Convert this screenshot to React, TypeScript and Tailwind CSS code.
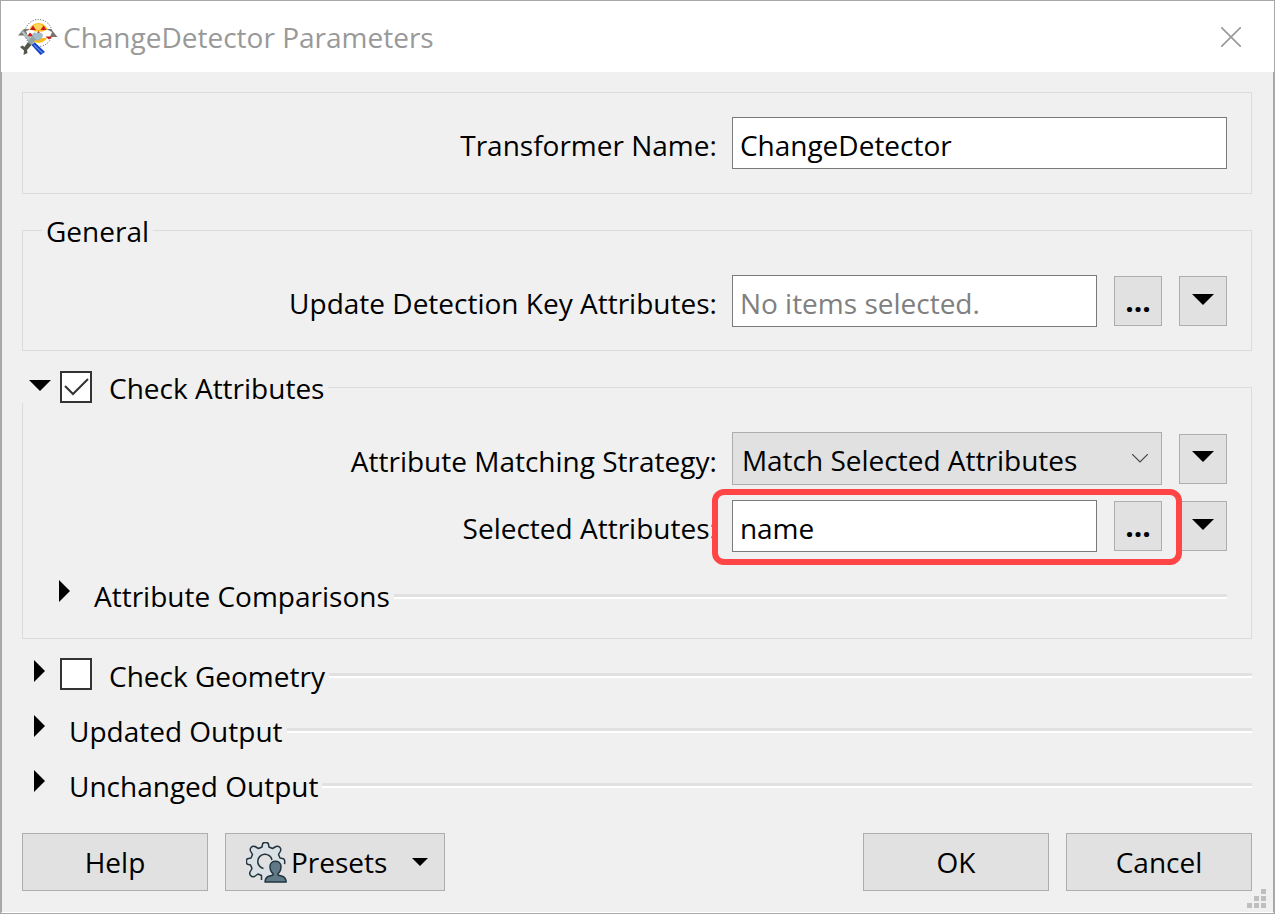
import { useState } from "react";
import type { ReactNode } from "react";
import clsx from "clsx";

const controlBorder = "border border-[#adadad] bg-[#e1e1e1]";

function TriangleDown({ className }: { className: string }) {
  return (
    <svg viewBox="0 0 22 11" className={className} aria-hidden="true">
      <path d="M0 0h22L11 11z" fill="currentColor" />
    </svg>
  );
}

function TriangleRight() {
  return (
    <svg viewBox="0 0 11 22" className="h-[22px] w-[11px]" aria-hidden="true">
      <path d="M0 0v22l11-11z" fill="currentColor" />
    </svg>
  );
}

function TransformerLogo() {
  return (
    <svg viewBox="0 0 40 36" className="h-9 w-10 shrink-0" aria-hidden="true">
      <circle cx="20.5" cy="14" r="13.5" fill="#fff" stroke="#444" strokeWidth="1" strokeDasharray="1 1.6" />
      <circle cx="20.5" cy="14" r="10" fill="#fdb91c" />
      <ellipse cx="20" cy="8" rx="5" ry="3" fill="#ffd65a" />
      <path d="M0 16.5l6-6.500h5l-2 6.500zM29 10h4l6.500 8H31z" fill="#77756c" />
      <path d="M8 12l5-1.500 4 2h8l4-2 5 2.500-2 5-5 1H11z" fill="#fff" />
      <path d="M12 11l3-4.500 3 4.500zM22.500 11l3-4.500 3 4.500zM17.500 16l3-4 3 4zM27.500 17.500h7l-3.500 3zM9 17.500l3-4 4 4z" fill="#c9181e" />
      <path d="M3 13l2-1.500L18 25l-3 2z" fill="#b5c6cb" stroke="#7c898b" strokeWidth=".6" />
      <path d="M15 15l2-2 1 4 3 1 2-4 1.500 1v3l-4 3.500-3-.5-8 9-3-2z" fill="#93a3a3" />
      <path d="M14.500 14.500l7-1 3 2-1 4-4 2-4-3z" fill="#a3bec9" />
      <path d="M2 28l2.500-1.500 2 1.500 3.500-4.500 3.500 2.500-4.500 5 .5 3-4 2 .5-4.500z" fill="#56564b" />
      <path d="M13.500 26l3.500-2.500L27 33l-4.500 3z" fill="#1743c4" />
      <path d="M16 26l8.500 8" stroke="#5f8cf0" strokeWidth="1.200" />
    </svg>
  );
}

function PresetsIcon() {
  return (
    <svg
      viewBox="0 0 41 41"
      className="size-[41px] shrink-0"
      fill="none"
      stroke="#22343e"
      strokeWidth="1.5"
      strokeLinejoin="round"
      aria-hidden="true"
    >
      <path
        d="M15.500 38v-4.500l-3.500-1.500-3.500 2.500c-3 1-5.500-1.500-4.500-4.500l2-3.500-1.500-3.500-3-.7c-1.500-1-1.500-4.600 0-5.600l3.500-.7 1.500-3.500-2-3.500c-1-3 1.500-5.500 4.500-4.500l3.500 2 3.500-1.500.7-3.500c1-1.500 4.600-1.500 5.600 0l.7 3.500 3.500 1.500 3.500-2c3-1 5.500 1.500 4.500 4.500l-2 3.500 1.500 3.500 3.500.7c1.500 1 1.500 3 1 5.500"
        fill="#dae1e4"
      />
      <path d="M17.500 26.500a7.200 7.200 0 1 1 8.500-8.500" fill="#e1e1e1" />
      <path
        d="M24 24.500c0-7 11-7 11 0 0 3.500-1 5.500-3 7v1.500l5 1.500c2.500 1 3 3 3.200 5.500H19c.2-2.500.7-4.500 3-5.500l5-1.500v-1.500c-2-1.500-3-3.500-3-7z"
        fill="#5f7986"
      />
    </svg>
  );
}

function Row({ label, htmlFor, children }: { label: string; htmlFor: string; children: ReactNode }) {
  return (
    <div className="grid grid-cols-[minmax(0,23fr)_minmax(0,17fr)] items-center gap-[15px]">
      <label htmlFor={htmlFor} className="pt-1 text-right whitespace-nowrap">
        {label}
      </label>
      <div className="relative flex min-w-0 items-center gap-[17px]">{children}</div>
    </div>
  );
}

function TextField({
  id,
  initial = "",
  placeholder,
}: {
  id: string;
  initial?: string;
  placeholder?: string;
}) {
  const [value, setValue] = useState(initial);

  return (
    <input
      id={id}
      type="text"
      value={value}
      placeholder={placeholder}
      onChange={(e) => setValue(e.target.value)}
      className="h-[52px] min-w-0 flex-1 border border-[#7a7a7a] bg-white px-[7px] pt-1 outline-none placeholder:text-[#808080]"
    />
  );
}

function BrowseButton({ label }: { label: string }) {
  return (
    <button
      type="button"
      aria-label={label}
      className={clsx(controlBorder, "h-[50px] w-12 shrink-0 text-[30px] font-bold")}
    >
      ...
    </button>
  );
}

function MenuButton({ label }: { label: string }) {
  return (
    <button
      type="button"
      aria-label={label}
      className={clsx(controlBorder, "grid h-[50px] w-12 shrink-0 place-items-center pb-1")}
    >
      <TriangleDown className="h-[11px] w-[22px]" />
    </button>
  );
}

function CheckBox({ id, initial }: { id: string; initial: boolean }) {
  const [checked, setChecked] = useState(initial);

  return (
    <span className="relative size-8 shrink-0">
      <input
        id={id}
        type="checkbox"
        checked={checked}
        onChange={(e) => setChecked(e.target.checked)}
        className="block size-8 appearance-none border-2 border-[#333] bg-white"
      />
      {checked && (
        <svg viewBox="0 0 32 32" className="pointer-events-none absolute inset-0" aria-hidden="true">
          <path d="M5 15l8 8L28 8" fill="none" stroke="#333" strokeWidth="2" />
        </svg>
      )}
    </span>
  );
}

function Section({
  title,
  checkboxId,
  className = "h-[55px]",
}: {
  title: string;
  checkboxId?: string;
  className?: string;
}) {
  return (
    <div className={clsx("flex items-center", className)}>
      <button type="button" aria-label={`Expand ${title}`} className="w-[38px] shrink-0 pb-1.5 pl-3">
        <TriangleRight />
      </button>
      {checkboxId ? (
        <>
          <CheckBox id={checkboxId} initial={false} />
          <label htmlFor={checkboxId} className="pt-1 pr-1 pl-[17px]">
            {title}
          </label>
        </>
      ) : (
        <span className="pt-1 pr-1 pl-[9px]">{title}</span>
      )}
      <span className="mt-1 h-[5px] flex-1 border-t-3 border-b-2 border-t-[#e1e1e1] border-b-white" />
    </div>
  );
}

export default function App() {
  return (
    <main className="relative flex min-h-screen flex-col border border-[#a8a8a8] bg-[#f0f0f0] font-['Open_Sans',sans-serif] text-[28px] leading-10 text-black">
      <header className="flex h-[71px] items-center bg-white pl-[17px] text-[#999]">
        <TransformerLogo />
        <h1 className="flex-1 pl-[5px]">ChangeDetector Parameters</h1>
        <button type="button" aria-label="Close" className="mr-8 p-[1px]">
          <svg viewBox="0 0 20 20" className="size-5" aria-hidden="true">
            <path d="M0 0l20 20M20 0L0 20" stroke="#999" strokeWidth="1.6" />
          </svg>
        </button>
      </header>

      <form
        className="flex flex-1 flex-col border-x border-b border-x-[#a8a8a8] border-b-white py-5 pr-[21px] pl-5"
        onSubmit={(e) => e.preventDefault()}
      >
        <div className="border border-[#dcdcdc] px-6 py-6">
          <Row label="Transformer Name:" htmlFor="transformer-name">
            <TextField id="transformer-name" initial="ChangeDetector" />
          </Row>
        </div>

        <fieldset className="mt-5 min-w-0 border border-[#dcdcdc]">
          <legend className="ml-[19px] flex h-8 items-center px-1 pt-0.5">General</legend>
          <div className="px-6 pt-[29px] pb-[23px]">
            <Row label="Update Detection Key Attributes:" htmlFor="key-attributes">
              <TextField id="key-attributes" placeholder="No items selected." />
              <BrowseButton label="Browse key attributes" />
              <MenuButton label="Key attributes menu" />
            </Row>
          </div>
        </fieldset>

        <fieldset className="mt-5 min-w-0 border border-[#dcdcdc]">
          <legend className="-ml-px flex h-8 items-center bg-[#f0f0f0]">
            <button type="button" aria-label="Collapse Check Attributes" className="w-[38px] shrink-0 pb-1 pl-[7px]">
              <TriangleDown className="h-[11px] w-[22px]" />
            </button>
            <CheckBox id="check-attributes" initial={true} />
            <label htmlFor="check-attributes" className="pt-0.5 pr-1 pl-[17px]">
              Check Attributes
            </label>
          </legend>
          <div className="px-6 pt-[29px] pb-6">
            <div className="flex flex-col gap-[15px]">
              <Row label="Attribute Matching Strategy:" htmlFor="matching-strategy">
                <span className="relative min-w-0 flex-1">
                  <select
                    id="matching-strategy"
                    className={clsx(
                      controlBorder,
                      "block h-[53px] w-full appearance-none pt-0.5 pr-10 pl-[9px] outline-none",
                    )}
                  >
                    <option>Match Selected Attributes</option>
                  </select>
                  <svg
                    viewBox="0 0 16 9"
                    className="pointer-events-none absolute top-[22px] right-[14px] h-[9px] w-4"
                    aria-hidden="true"
                  >
                    <path d="M0 0l8 8 8-8" fill="none" stroke="#444" strokeWidth="1.2" />
                  </svg>
                </span>
                <MenuButton label="Matching strategy menu" />
              </Row>
              <Row label="Selected Attributes:" htmlFor="selected-attributes">
                <TextField id="selected-attributes" initial="name" />
                <BrowseButton label="Browse selected attributes" />
                <MenuButton label="Selected attributes menu" />
                <span className="pointer-events-none absolute -top-[11px] right-[45px] -bottom-[13px] -left-5 rounded-xl border-6 border-[#ff4545]" />
              </Row>
            </div>
            <Section title="Attribute Comparisons" className="mt-[22px] h-10" />
          </div>
        </fieldset>

        <div className="mt-[7px]">
          <Section title="Check Geometry" checkboxId="check-geometry" />
          <Section title="Updated Output" />
          <Section title="Unchanged Output" />
        </div>

        <footer className="mt-[22px] flex gap-[17px]">
          <button type="button" className={clsx(controlBorder, "h-[58px] w-[186px]")}>
            Help
          </button>
          <button type="button" className={clsx(controlBorder, "flex h-[58px] w-[220px] items-center pr-4 pl-5")}>
            <PresetsIcon />
            <span className="flex-1 pl-1 text-left">Presets</span>
            <TriangleDown className="h-2 w-4" />
          </button>
          <button type="submit" className={clsx(controlBorder, "ml-auto h-[58px] w-[186px]")}>
            OK
          </button>
          <button type="button" className={clsx(controlBorder, "h-[58px] w-[186px]")}>
            Cancel
          </button>
        </footer>
      </form>

      <svg viewBox="0 0 19 19" className="absolute right-2 bottom-[5px] size-[19px]" aria-hidden="true">
        <path
          d="M14 0h5v5h-5zM7 7h5v5H7zM14 7h5v5h-5zM0 14h5v5H0zM7 14h5v5H7zM14 14h5v5h-5z"
          fill="#bfbfbf"
        />
      </svg>
    </main>
  );
}
